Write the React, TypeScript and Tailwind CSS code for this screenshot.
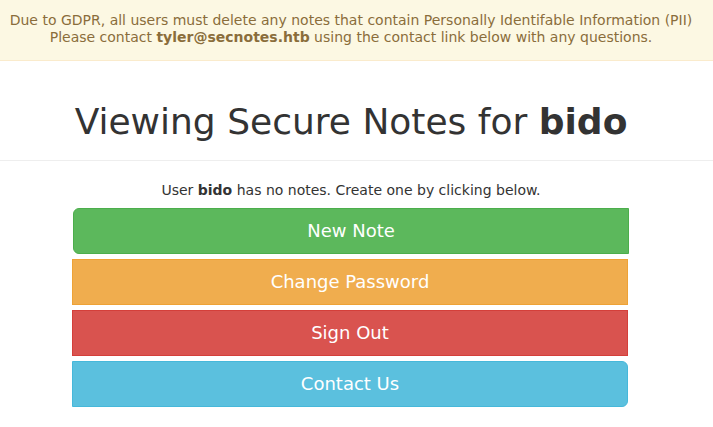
import React from "react";

export default function App() {
  const font = { fontFamily: '"DejaVu Sans", Verdana, sans-serif' };
  return (
    <div className="min-h-[427px] bg-white text-[#333]" style={font}>
      <div className="bg-[#fcf8e3] border-b border-[#faebcc] text-[#8a6d3b] pt-[12px] pb-[14px]">
        <div className="w-[702px] text-center text-[14px] leading-[17px]">
          <div>Due to GDPR, all users must delete any notes that contain Personally Identifable Information (PII)</div>
          <div>
            Please contact <b>tyler@secnotes.htb</b> using the contact link below with any questions.
          </div>
        </div>
      </div>
      <div className="w-[702px] mt-[41px] text-center text-[36px] leading-[40px] font-normal">
        Viewing Secure Notes for <b>bido</b>
      </div>
      <div className="mt-[18px] border-t border-[#eee]" />
      <div className="w-[702px] mt-[19px] text-center text-[14px] leading-[20px]">
        User <b>bido</b> has no notes. Create one by clicking below.
      </div>
      <div className="mt-[8px] pl-[72px] flex flex-col items-start gap-[5px] text-white text-[18px] leading-[24px]">
        <div className="w-[556px] h-[46px] ml-[1px] flex items-center justify-center bg-[#5cb85c] border border-[#4cae4c] rounded-l-[6px]">
          New Note
        </div>
        <div className="w-[556px] h-[46px] flex items-center justify-center bg-[#f0ad4e] border border-[#eea236]">
          Change Password
        </div>
        <div className="w-[556px] h-[46px] flex items-center justify-center bg-[#d9534f] border border-[#d43f3a]">
          Sign Out
        </div>
        <div className="w-[556px] h-[46px] flex items-center justify-center bg-[#5bc0de] border border-[#46b8da] rounded-r-[6px]">
          Contact Us
        </div>
      </div>
    </div>
  );
}
